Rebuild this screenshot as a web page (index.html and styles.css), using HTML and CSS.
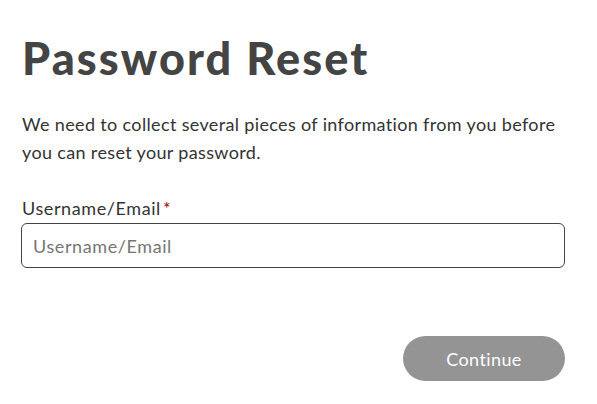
FILE: index.html
```html
<!DOCTYPE html>
<html lang="en">
<head>
<meta charset="utf-8">
<title>Password Reset</title>
<link rel="stylesheet" href="styles.css">
</head>
<body>
<main class="page">
  <h1 class="title">Password Reset</h1>
  <p class="intro">We need to collect several pieces of information from you before you can reset your password.</p>
  <form class="form">
    <label class="label" for="user">Username/Email<span class="req">*</span></label>
    <input class="input" id="user" type="text" placeholder="Username/Email">
    <div class="actions">
      <button class="btn" type="button">Continue</button>
    </div>
  </form>
</main>
</body>
</html>
```

FILE: styles.css
```css
html, body {
  margin: 0;
  padding: 0;
  background: #fff;
}
body {
  font-family: Lato, "Open Sans", sans-serif;
  color: #333;
}
.page {
  padding: 27px 32px 0 21px;
}
.title {
  margin: 0;
  font-size: 45px;
  line-height: 62px;
  font-weight: 900;
  letter-spacing: 2.1px;
  color: #444;
  padding-left: 1px;
}
.intro {
  margin: 21px 0 0 1px;
  font-size: 18px;
  line-height: 28px;
  letter-spacing: 0.35px;
  color: #333;
  max-width: 545px;
}
.form {
  margin-top: 30px;
}
.label {
  display: block;
  font-size: 18px;
  line-height: 24px;
  letter-spacing: 0.6px;
  color: #333;
  margin-left: 1px;
}
.req {
  color: #a00000;
  margin-left: 2px;
}
.input {
  display: block;
  box-sizing: border-box;
  width: 544px;
  height: 45px;
  margin-top: 3px;
  border: 1px solid #444;
  border-radius: 6px;
  padding: 0 11px;
  font-family: inherit;
  font-size: 18px;
  letter-spacing: 0.6px;
  color: #333;
  outline: none;
}
.input::placeholder {
  color: #767676;
}
.actions {
  display: flex;
  justify-content: flex-end;
  width: 544px;
  margin-top: 68px;
}
.btn {
  width: 162px;
  height: 45px;
  border: none;
  border-radius: 23px;
  background: #949494;
  color: #fff;
  font-family: inherit;
  font-size: 18px;
  letter-spacing: 0.4px;
}
```
